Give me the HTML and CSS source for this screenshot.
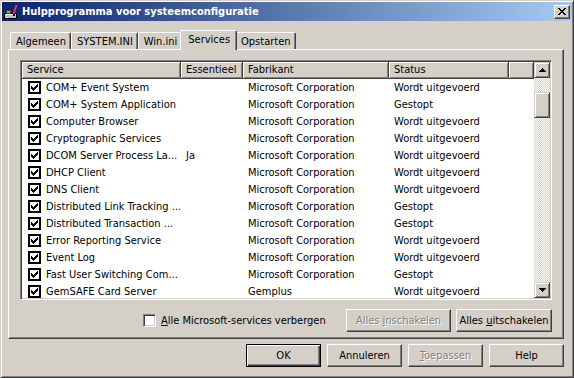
FILE: index.html
```html
<!DOCTYPE html>
<html>
<head>
  <title>Hulpprogramma voor systeemconfiguratie</title>
  <link rel="stylesheet" href="styles.css">
</head>
<body>
  <svg class="defs" width="0" height="0">
    <symbol id="check" viewBox="0 0 13 13">
      <rect x="1" y="1" width="11" height="11" fill="#fff" stroke="#000" stroke-width="2"/>
      <path d="M9 3h1v1H9zM8 4h2v1H8zM3 5h1v1H3zM7 5h3v1H7zM3 6h2v1H3zM6 6h3v1H6zM3 7h5v1H3zM4 8h3v1H4zM5 9h1v1H5z" fill="#000"/>
    </symbol>
  </svg>

  <div class="window">
    <div class="titlebar">
      <svg class="app-icon" width="16" height="16" viewBox="0 0 16 16">
        <path d="M1.5 9.5h12v5h-12z" fill="#c0c0c0" stroke="#000"/>
        <path d="M2.5 10.5h10" stroke="#fff"/>
        <path d="M3 6h5v4H3z" fill="#404040"/>
        <path d="M4 7h3v2H4z" fill="#a0a0a0"/>
        <path d="M13.5 1 L10.5 10" stroke="#e03090" stroke-width="2"/>
        <path d="M10 10h2v2h-2z" fill="#000"/>
      </svg>
      <span class="title">Hulpprogramma voor systeemconfiguratie</span>
      <div class="close-btn">
        <svg width="8" height="7" viewBox="0 0 8 7"><path d="M0 0h2v1H0zM6 0h2v1H6zM1 1h2v1H1zM5 1h2v1H5zM2 2h4v1H2zM3 3h2v1H3zM2 4h4v1H2zM1 5h2v1H1zM5 5h2v1H5zM0 6h2v1H0zM6 6h2v1H6z" fill="#000"/></svg>
      </div>
    </div>

    <div class="tabs">
      <div class="tab">Algemeen</div>
      <div class="tab">SYSTEM.INI</div>
      <div class="tab">Win.ini</div>
      <div class="tab tab-active">Services</div>
      <div class="tab">Opstarten</div>
    </div>

    <div class="panel">
      <div class="listview">
        <div class="list">
          <div class="list-header">
            <div class="col-head">Service</div>
            <div class="col-head">Essentieel</div>
            <div class="col-head">Fabrikant</div>
            <div class="col-head">Status</div>
            <div class="col-head"></div>
          </div>
          <div class="list-row">
            <div class="cell cell-name"><svg class="check"><use href="#check"/></svg>COM+ Event System</div>
            <div class="cell"></div>
            <div class="cell">Microsoft Corporation</div>
            <div class="cell">Wordt uitgevoerd</div>
          </div>
          <div class="list-row">
            <div class="cell cell-name"><svg class="check"><use href="#check"/></svg>COM+ System Application</div>
            <div class="cell"></div>
            <div class="cell">Microsoft Corporation</div>
            <div class="cell">Gestopt</div>
          </div>
          <div class="list-row">
            <div class="cell cell-name"><svg class="check"><use href="#check"/></svg>Computer Browser</div>
            <div class="cell"></div>
            <div class="cell">Microsoft Corporation</div>
            <div class="cell">Wordt uitgevoerd</div>
          </div>
          <div class="list-row">
            <div class="cell cell-name"><svg class="check"><use href="#check"/></svg>Cryptographic Services</div>
            <div class="cell"></div>
            <div class="cell">Microsoft Corporation</div>
            <div class="cell">Wordt uitgevoerd</div>
          </div>
          <div class="list-row">
            <div class="cell cell-name"><svg class="check"><use href="#check"/></svg>DCOM Server Process La...</div>
            <div class="cell">Ja</div>
            <div class="cell">Microsoft Corporation</div>
            <div class="cell">Wordt uitgevoerd</div>
          </div>
          <div class="list-row">
            <div class="cell cell-name"><svg class="check"><use href="#check"/></svg>DHCP Client</div>
            <div class="cell"></div>
            <div class="cell">Microsoft Corporation</div>
            <div class="cell">Wordt uitgevoerd</div>
          </div>
          <div class="list-row">
            <div class="cell cell-name"><svg class="check"><use href="#check"/></svg>DNS Client</div>
            <div class="cell"></div>
            <div class="cell">Microsoft Corporation</div>
            <div class="cell">Wordt uitgevoerd</div>
          </div>
          <div class="list-row">
            <div class="cell cell-name"><svg class="check"><use href="#check"/></svg>Distributed Link Tracking ...</div>
            <div class="cell"></div>
            <div class="cell">Microsoft Corporation</div>
            <div class="cell">Gestopt</div>
          </div>
          <div class="list-row">
            <div class="cell cell-name"><svg class="check"><use href="#check"/></svg>Distributed Transaction ...</div>
            <div class="cell"></div>
            <div class="cell">Microsoft Corporation</div>
            <div class="cell">Gestopt</div>
          </div>
          <div class="list-row">
            <div class="cell cell-name"><svg class="check"><use href="#check"/></svg>Error Reporting Service</div>
            <div class="cell"></div>
            <div class="cell">Microsoft Corporation</div>
            <div class="cell">Wordt uitgevoerd</div>
          </div>
          <div class="list-row">
            <div class="cell cell-name"><svg class="check"><use href="#check"/></svg>Event Log</div>
            <div class="cell"></div>
            <div class="cell">Microsoft Corporation</div>
            <div class="cell">Wordt uitgevoerd</div>
          </div>
          <div class="list-row">
            <div class="cell cell-name"><svg class="check"><use href="#check"/></svg>Fast User Switching Com...</div>
            <div class="cell"></div>
            <div class="cell">Microsoft Corporation</div>
            <div class="cell">Gestopt</div>
          </div>
          <div class="list-row">
            <div class="cell cell-name"><svg class="check"><use href="#check"/></svg>GemSAFE Card Server</div>
            <div class="cell"></div>
            <div class="cell">Gemplus</div>
            <div class="cell">Wordt uitgevoerd</div>
          </div>
        </div>

        <div class="scrollbar">
          <div class="scroll-btn">
            <svg width="7" height="4" viewBox="0 0 7 4"><path d="M3 0h1v1H3zM2 1h3v1H2zM1 2h5v1H1zM0 3h7v1H0z" fill="#000"/></svg>
          </div>
          <div class="scroll-track">
            <div class="scroll-thumb"></div>
          </div>
          <div class="scroll-btn">
            <svg width="7" height="4" viewBox="0 0 7 4"><path d="M0 0h7v1H0zM1 1h5v1H1zM2 2h3v1H2zM3 3h1v1H3z" fill="#000"/></svg>
          </div>
        </div>
      </div>

      <div class="panel-footer">
        <div class="footer-check">
          <span class="checkbox-3d"></span>
          <span><u>A</u>lle Microsoft-services verbergen</span>
        </div>
        <div class="footer-buttons">
          <div class="btn btn-disabled btn-enable"><span>Alles <u>i</u>nschakelen</span></div>
          <div class="btn btn-disable"><span>Alles <u>u</u>itschakelen</span></div>
        </div>
      </div>
    </div>

    <div class="dialog-buttons">
      <div class="btn btn-default">OK</div>
      <div class="btn">Annuleren</div>
      <div class="btn btn-disabled"><span><u>T</u>oepassen</span></div>
      <div class="btn">Help</div>
    </div>
  </div>
</body>
</html>
```

FILE: styles.css
```css
* {
  box-sizing: border-box;
}

body {
  margin: 0;
  background-color: #d4d0c8;
  font-family: "DejaVu Sans Condensed", "Liberation Sans", sans-serif;
  font-size: 11px;
  color: #000;
}

.defs {
  display: block;
  width: 0;
  height: 0;
  overflow: hidden;
}

.window {
  width: 574px;
  height: 378px;
  padding: 1px;
  border: 1px solid;
  border-color: #d4d0c8 #404040 #404040 #d4d0c8;
  box-shadow: inset 1px 1px #fff, inset -1px -1px #808080;
}

/* title bar */
.titlebar {
  display: flex;
  align-items: center;
  height: 19px;
  padding: 0 2px 0 1px;
  background: linear-gradient(to right, #0a246a, #a6caf0);
  color: #fff;
  font-weight: bold;
}

.app-icon {
  margin-right: 3px;
  flex-shrink: 0;
}

.close-btn {
  display: flex;
  align-items: center;
  justify-content: center;
  margin-left: auto;
  width: 16px;
  height: 14px;
  background-color: #d4d0c8;
  border: 1px solid;
  border-color: #fff #404040 #404040 #fff;
  box-shadow: inset -1px -1px #808080;
}

/* tabs */
.tabs {
  display: flex;
  align-items: flex-end;
  height: 19px;
  margin: 9px 0 0 8px;
}

.tab {
  display: flex;
  align-items: center;
  height: 17px;
  padding: 0 4px 0 5px;
  border: 1px solid;
  border-color: #fff #404040 transparent #fff;
  border-bottom: none;
  border-radius: 2px 2px 0 0;
  box-shadow: inset -1px 0 #808080;
  background-color: #d4d0c8;
  white-space: nowrap;
}

.tab-active {
  position: relative;
  z-index: 1;
  height: 20px;
  margin: 0 -2px -1px;
  padding: 0 6px 2px 7px;
}

/* tab page */
.panel {
  width: 556px;
  height: 290px;
  margin-left: 6px;
  padding: 10px 0 0 11px;
  border: 1px solid;
  border-color: #fff #404040 #404040 #fff;
  box-shadow: inset -1px -1px #808080;
}

.listview {
  display: flex;
  width: 532px;
  height: 240px;
  padding: 1px;
  background-color: #fff;
  border: 1px solid;
  border-color: #808080 #fff #fff #808080;
  box-shadow: inset 1px 1px #404040, inset -1px -1px #d4d0c8;
}

.list {
  flex: 1;
  overflow: hidden;
}

.list-header,
.list-row {
  display: grid;
  grid-template-columns: 159px 62px 146px 120px 25px;
}

.list-header {
  height: 17px;
}

.col-head {
  padding-left: 5px;
  line-height: 15px;
  background-color: #d4d0c8;
  border-right: 1px solid #404040;
  border-bottom: 1px solid #404040;
  box-shadow: inset 1px 1px #fff, inset -1px -1px #808080;
  white-space: nowrap;
  overflow: hidden;
}

.list-row {
  height: 17px;
  align-items: center;
}

.cell {
  padding-left: 5px;
  white-space: nowrap;
  overflow: hidden;
}

.cell-name {
  display: flex;
  align-items: center;
  gap: 5px;
  padding-left: 6px;
}

.check {
  width: 13px;
  height: 13px;
  flex-shrink: 0;
}

/* scrollbar */
.scrollbar {
  display: flex;
  flex-direction: column;
  width: 16px;
}

.scroll-btn,
.scroll-thumb {
  background-color: #d4d0c8;
  border: 1px solid;
  border-color: #d4d0c8 #404040 #404040 #d4d0c8;
  box-shadow: inset 1px 1px #fff, inset -1px -1px #808080;
}

.scroll-btn {
  display: flex;
  align-items: center;
  justify-content: center;
  height: 16px;
}

.scroll-track {
  flex: 1;
  padding-top: 14px;
  background: repeating-conic-gradient(#d4d0c8 0 25%, #fff 0 50%) 0 0 / 2px 2px;
}

.scroll-thumb {
  height: 26px;
}

/* footer of the tab page */
.panel-footer {
  display: flex;
  align-items: center;
  width: 532px;
  height: 23px;
  margin-top: 9px;
  padding-left: 123px;
}

.footer-check {
  display: flex;
  align-items: center;
  gap: 5px;
}

.checkbox-3d {
  width: 13px;
  height: 13px;
  background-color: #fff;
  border: 1px solid;
  border-color: #808080 #fff #fff #808080;
  box-shadow: inset 1px 1px #404040, inset -1px -1px #d4d0c8;
}

.footer-buttons {
  display: flex;
  gap: 5px;
  margin-left: auto;
}

/* buttons */
.btn {
  display: flex;
  align-items: center;
  justify-content: center;
  width: 75px;
  height: 23px;
  background-color: #d4d0c8;
  border: 1px solid;
  border-color: #fff #404040 #404040 #fff;
  box-shadow: inset -1px -1px #808080;
  white-space: nowrap;
}

.btn-default {
  border-color: #000;
  box-shadow: inset 1px 1px #fff, inset -1px -1px #404040, inset -2px -2px #808080;
}

.btn-disabled {
  color: #808080;
  text-shadow: 1px 1px #fff;
}

.btn-enable {
  width: 105px;
}

.btn-disable {
  width: 96px;
}

.dialog-buttons {
  display: flex;
  justify-content: flex-end;
  gap: 6px;
  width: 556px;
  margin: 5px 0 0 6px;
}
```
